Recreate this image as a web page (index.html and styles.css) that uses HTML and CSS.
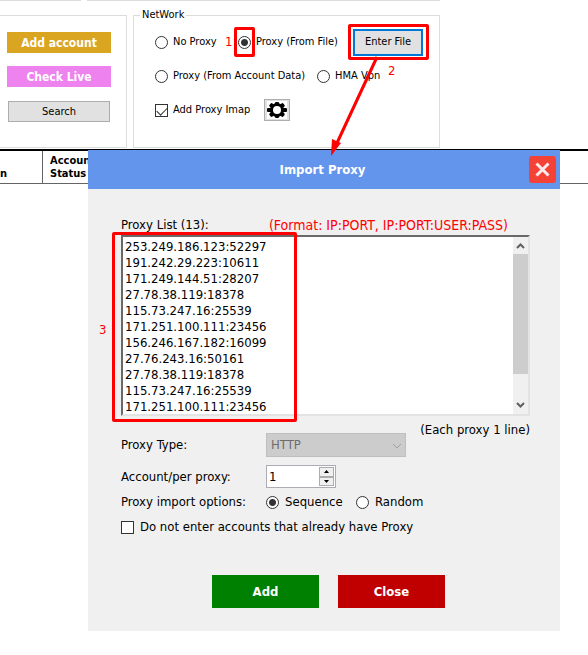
FILE: index.html
```
<!DOCTYPE html>
<html lang="en">
<head>
    <meta charset="UTF-8">
    <meta name="viewport" content="width=device-width, initial-scale=1.0">
    <title>Import Proxy</title>
    <link rel="stylesheet" href="styles.css">
</head>
<body>
    <div class="strip">
        <div class="strip-left"></div>
        <div class="strip-right"></div>
    </div>

    <div class="toolbar">
        <div class="actions">
            <button type="button" class="btn-account">Add account</button>
            <button type="button" class="btn-live">Check Live</button>
            <button type="button" class="btn-search">Search</button>
        </div>
        <fieldset class="network">
            <legend>NetWork</legend>
            <div class="row">
                <label class="option none"><input type="radio" name="network"> No Proxy</label>
                <span class="step step-one">1</span>
                <label class="option file"><input type="radio" name="network" checked> Proxy (From File)<span class="mark mark-radio"></span></label>
                <div class="enter">
                    <button type="button" class="btn-enter">Enter File</button>
                    <span class="mark mark-enter"></span>
                    <span class="step step-two">2</span>
                    <svg class="arrow" width="60" height="110" viewBox="0 0 60 110">
                        <path d="M50 2 L10 88" stroke="#ff0000" stroke-width="3"/>
                        <path d="M4 101 L5 84 L14 88 Z" fill="#ff0000"/>
                    </svg>
                </div>
            </div>
            <div class="row">
                <label class="option data"><input type="radio" name="network"> Proxy (From Account Data)</label>
                <label class="option"><input type="radio" name="network"> HMA Vpn</label>
            </div>
            <div class="row">
                <label class="option imap"><input type="checkbox" checked> Add Proxy Imap</label>
                <button type="button" class="btn-gear" aria-label="Settings">
                    <svg width="20" height="18" viewBox="-10 -9 20 18">
                        <rect x="-10" y="-9" width="20" height="18" fill="#ffffff"/>
                        <g fill="#000000">
                            <rect x="-2" y="-8" width="4" height="16" rx="1"/>
                            <rect x="-2" y="-9" width="4" height="18" rx="1" transform="rotate(50)"/>
                            <rect x="-2" y="-10" width="4" height="20" rx="1" transform="rotate(90)"/>
                            <rect x="-2" y="-9" width="4" height="18" rx="1" transform="rotate(130)"/>
                            <circle r="7"/>
                        </g>
                        <circle r="4" fill="#ffffff"/>
                    </svg>
                </button>
            </div>
        </fieldset>
    </div>

    <table class="accounts">
        <thead>
            <tr>
                <th class="first"><br>n</th>
                <th>Account<br>Status</th>
            </tr>
        </thead>
    </table>

    <div class="dialog" role="dialog" aria-labelledby="dialog-title">
        <div class="titlebar">
            <h1 id="dialog-title">Import Proxy</h1>
            <button type="button" class="btn-x" aria-label="Close window">
                <svg width="27" height="27" viewBox="0 0 27 27">
                    <path d="M7.500 7.500 L19.500 19.500 M19.500 7.500 L7.500 19.500" stroke="#ffebee" stroke-width="3"/>
                </svg>
            </button>
        </div>
        <form class="content">
            <div class="list-head">
                <label for="list">Proxy List (13):</label>
                <span class="format">(Format: IP:PORT, IP:PORT:USER:PASS)</span>
            </div>
            <div class="list">
                <textarea id="list" spellcheck="false" wrap="off">253.249.186.123:52297
191.242.29.223:10611
171.249.144.51:28207
27.78.38.119:18378
115.73.247.16:25539
171.251.100.111:23456
156.246.167.182:16099
27.76.243.16:50161
27.78.38.119:18378
115.73.247.16:25539
171.251.100.111:23456</textarea>
                <div class="scrollbar">
                    <svg width="15" height="17" viewBox="0 0 15 17"><path d="M4 11 L7.500 7.500 L11 11" fill="none" stroke="#606060" stroke-width="2"/></svg>
                    <div class="thumb"></div>
                    <svg width="15" height="17" viewBox="0 0 15 17"><path d="M4 6 L7.500 9.500 L11 6" fill="none" stroke="#606060" stroke-width="2"/></svg>
                </div>
                <span class="mark mark-list"></span>
                <span class="step step-three">3</span>
            </div>
            <p class="hint">(Each proxy 1 line)</p>
            <div class="field field-type">
                <label for="type">Proxy Type:</label>
                <div class="select">
                    <select id="type" disabled><option>HTTP</option></select>
                    <svg width="10" height="6" viewBox="0 0 10 6"><path d="M1 1 L5 5 L9 1" fill="none" stroke="#a0a0a0"/></svg>
                </div>
            </div>
            <div class="field field-count">
                <label for="count">Account/per proxy:</label>
                <div class="spinner">
                    <input type="text" id="count" value="1">
                    <div class="spin">
                        <button type="button" aria-label="More"><svg width="5" height="3" viewBox="0 0 5 3"><path d="M0 3 L2.500 0 L5 3 Z"/></svg></button>
                        <button type="button" aria-label="Less"><svg width="5" height="3" viewBox="0 0 5 3"><path d="M0 0 L2.500 3 L5 0 Z"/></svg></button>
                    </div>
                </div>
            </div>
            <div class="field field-order">
                <span class="caption">Proxy import options:</span>
                <label class="option sequence"><input type="radio" name="order" checked> Sequence</label>
                <label class="option"><input type="radio" name="order"> Random</label>
            </div>
            <label class="option skip"><input type="checkbox"> Do not enter accounts that already have Proxy</label>
            <div class="buttons">
                <button type="button" class="btn-add">Add</button>
                <button type="button" class="btn-close">Close</button>
            </div>
        </form>
    </div>
</body>
</html>
```
FILE: styles.css
```
*
{
    box-sizing: border-box;
}
body
{
    margin: 0;
    position: relative;
    min-height: 100vh;
    background-color: #ffffff;
    color: #000000;
    font-family: "DejaVu Sans Condensed", "DejaVu Sans", sans-serif;
    font-size: 11px;
    line-height: 14px;
}
button, input, select, textarea
{
    font: inherit;
    color: inherit;
    margin: 0;
}
button
{
    border: none;
    padding: 0;
    cursor: pointer;
}
svg
{
    display: block;
}

/* Bottom edge of the groups above */
.strip
{
    display: flex;
    gap: 6px;
    height: 8px;
}
.strip-left
{
    width: 81px;
    height: 1px;
    background-color: #dcdcdc;
}
.strip-right
{
    width: 353px;
    height: 1px;
    background-color: #dcdcdc;
}

.toolbar
{
    display: flex;
    gap: 6px;
    height: 141px;
}
.actions
{
    display: flex;
    flex-direction: column;
    width: 127px;
    height: 133px;
    margin-top: 7px;
    padding: 16px 15px 0 7px;
    border: 1px solid #dcdcdc;
    border-left: none;
}
.actions button
{
    height: 21px;
    margin-bottom: 13px;
    color: #ffffff;
    font-size: 12px;
    font-weight: bold;
}
.actions .btn-account
{
    background-color: #daa520;
}
.actions .btn-live
{
    background-color: #ee82ee;
}
.actions .btn-search
{
    margin: 1px 1px 0;
    border: 1px solid #adadad;
    background-color: #e1e1e1;
    color: #000000;
    font-size: 11px;
    font-weight: normal;
}
.network
{
    width: 307px;
    height: 140px;
    margin: 0;
    padding: 3px 16px 0 21px;
    border: 1px solid #dcdcdc;
}
.network legend
{
    margin-left: -15px;
    padding: 0 2px;
}
.row
{
    display: flex;
    align-items: center;
    height: 34px;
}
.option
{
    display: flex;
    align-items: center;
    gap: 5px;
    position: relative;
    white-space: nowrap;
}
.option.none
{
    width: 70px;
}
.option.file
{
    width: 115px;
}
.option.data
{
    width: 162px;
}
.option.imap
{
    width: 109px;
}

input[type="radio"], input[type="checkbox"]
{
    appearance: none;
    flex: none;
    width: 13px;
    height: 13px;
    border: 1px solid #333333;
    background-color: #ffffff;
}
input[type="radio"]
{
    border-radius: 50%;
}
input[type="radio"]:checked
{
    background-image: radial-gradient(circle, #333333 3px, #ffffff 4px);
}
input[type="checkbox"]:checked::before
{
    content: "";
    display: block;
    width: 9px;
    height: 5px;
    margin: 2px 1px;
    border: solid #333333;
    border-width: 0 0 1px 1px;
    transform: rotate(-45deg);
}

.enter
{
    position: relative;
}
.btn-enter
{
    width: 70px;
    height: 27px;
    border: 2px solid #0078d7;
    background-color: #e1e1e1;
}
.btn-gear
{
    display: flex;
    align-items: center;
    justify-content: center;
    width: 26px;
    height: 22px;
    border: 1px solid #adadad;
    background-color: #e1e1e1;
}

/* Numbered guide marks */
.mark
{
    position: absolute;
    border: 3px solid #ff0000;
    border-radius: 2px;
    pointer-events: none;
}
.mark-radio
{
    left: -4px;
    top: -8px;
    width: 21px;
    height: 30px;
}
.mark-enter
{
    left: -5px;
    top: -5px;
    width: 81px;
    height: 36px;
}
.mark-list
{
    left: -11px;
    top: -5px;
    width: 185px;
    height: 190px;
}
.step
{
    color: #ff0000;
    font-size: 13px;
}
.step-one
{
    width: 13px;
}
.step-two
{
    position: absolute;
    left: 35px;
    top: 35px;
}
.step-three
{
    position: absolute;
    left: -24px;
    top: 85px;
}
.arrow
{
    position: absolute;
    left: -26px;
    top: 26px;
    z-index: 2;
    pointer-events: none;
}

.accounts
{
    width: 100%;
    border-top: 2px solid #000000;
    border-spacing: 0;
    line-height: 13px;
}
.accounts th
{
    height: 33px;
    padding: 3px 7px;
    border-bottom: 1px solid #646464;
    text-align: left;
}
.accounts .first
{
    width: 43px;
    padding-left: 0;
    border-right: 1px solid #646464;
}

.dialog
{
    position: absolute;
    top: 150px;
    left: 88px;
    right: 28px;
    background-color: #f0f0f0;
    font-size: 13px;
    line-height: 16px;
}
.titlebar
{
    display: flex;
    align-items: center;
    height: 39px;
    padding-right: 4px;
    background-color: #6495ed;
    color: #ffffff;
}
.titlebar h1
{
    flex: 1;
    margin: 0;
    padding-left: 28px;
    font-size: 13px;
    text-align: center;
}
.btn-x
{
    width: 27px;
    height: 27px;
    border-radius: 3px;
    background-color: #f44336;
}
.content
{
    padding: 28px 30px 23px 33px;
}
.list-head
{
    display: flex;
    justify-content: space-between;
    padding-right: 22px;
}
.format
{
    color: #ff0000;
    font-size: 14px;
}
.list
{
    display: flex;
    position: relative;
    height: 181px;
    margin-top: 2px;
    border: 2px solid;
    border-color: #696969 #e3e3e3 #e3e3e3 #696969;
    background-color: #ffffff;
}
.list textarea
{
    flex: 1;
    min-width: 0;
    padding: 2px 2px 0;
    border: none;
    outline: none;
    resize: none;
    overflow: hidden;
    background-color: transparent;
}
.scrollbar
{
    display: flex;
    flex-direction: column;
    background-color: #f0f0f0;
}
.thumb
{
    height: 120px;
    margin-bottom: auto;
    background-color: #cdcdcd;
}
.hint
{
    margin: 6px 0 0;
    text-align: right;
}
.field
{
    display: flex;
    align-items: center;
}
.field > label:first-child, .caption
{
    width: 145px;
}
.field-type
{
    margin-top: -5px;
}
.select
{
    position: relative;
    width: 140px;
}
.select select
{
    display: block;
    appearance: none;
    width: 100%;
    height: 24px;
    padding: 0 4px;
    border: 1px solid #bfbfbf;
    border-radius: 0;
    background-color: #cccccc;
    color: #6d6d6d;
    opacity: 1;
}
.select svg
{
    position: absolute;
    right: 4px;
    top: 10px;
}
.field-count
{
    margin-top: 8px;
}
.spinner
{
    display: flex;
    width: 70px;
    height: 23px;
    padding: 1px;
    border: 1px solid #abadb3;
    background-color: #ffffff;
}
.spinner input
{
    flex: 1;
    min-width: 0;
    padding: 0 0 0 1px;
    border: none;
    outline: none;
}
.spin
{
    display: flex;
    flex-direction: column;
}
.spin button
{
    display: flex;
    flex: 1;
    align-items: center;
    justify-content: center;
    width: 15px;
    border: 1px solid #acacac;
    background-color: #f0f0f0;
}
.field-order
{
    margin-top: 6px;
}
.field-order .option, .skip
{
    gap: 6px;
}
.sequence
{
    width: 90px;
}
.skip
{
    margin-top: 9px;
}
.buttons
{
    display: flex;
    justify-content: center;
    gap: 19px;
    margin-top: 40px;
    padding-left: 6px;
}
.buttons button
{
    width: 107px;
    height: 33px;
    color: #ffffff;
    font-weight: bold;
}
.buttons .btn-add
{
    background-color: #008000;
}
.buttons .btn-close
{
    background-color: #c00000;
}
```
